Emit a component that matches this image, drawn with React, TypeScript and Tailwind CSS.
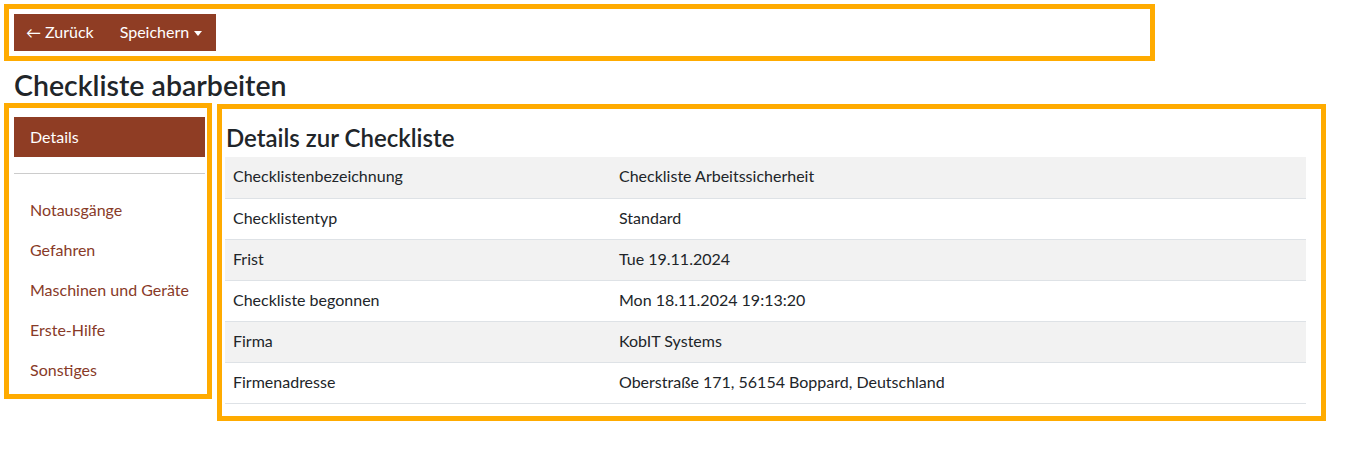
const rows = [
  ["Checklistenbezeichnung", "Checkliste Arbeitssicherheit"],
  ["Checklistentyp", "Standard"],
  ["Frist", "Tue 19.11.2024"],
  ["Checkliste begonnen", "Mon 18.11.2024 19:13:20"],
  ["Firma", "KobIT Systems"],
  ["Firmenadresse", "Oberstraße 171, 56154 Boppard, Deutschland"],
];

const sections = ["Notausgänge", "Gefahren", "Maschinen und Geräte", "Erste-Hilfe", "Sonstiges"];

export default function App() {
  return (
    <div className="w-[1359px] h-[451px] bg-white text-[#212529] font-['Lato','Liberation_Sans',sans-serif] text-[16px]">
      {/* toolbar */}
      <div className="pt-1 pl-1">
        <div className="w-[1151px] h-[57px] border-[5px] border-[#ffab00] px-[5px] pt-[5px]">
          <div className="inline-flex h-[37px] bg-[#8f3d24] text-white">
            <button className="flex items-center gap-1 pl-3 pr-[14px] pb-px">
              <span className="text-[15px]">←</span>
              <span>Zurück</span>
            </button>
            <button className="flex items-center pl-[12px] pr-[14px] pb-px">
              <span>Speichern</span>
              <span className="ml-[5px] mt-[2px] w-0 h-0 border-l-[4px] border-r-[4px] border-t-[5px] border-l-transparent border-r-transparent border-t-white" />
            </button>
          </div>
        </div>

        <h1 className="mt-[8px] pl-[10px] text-[28.5px] leading-[32px] font-semibold">Checkliste abarbeiten</h1>

        <div className="flex items-start gap-[5px] mt-[2px]">
          {/* side nav */}
          <div className="w-[208px] h-[296px] border-[5px] border-[#ffab00] pt-[9px] pl-[5px] pr-[2px]">
            <div className="h-10 flex items-center px-4 pb-px bg-[#8f3d24] text-white">Details</div>
            <div className="mt-4 h-px bg-[#cccccc]" />
            <ul className="mt-[16px]">
              {sections.map((s) => (
                <li key={s} className="h-10 flex items-center px-4 text-[#883a28]">
                  {s}
                </li>
              ))}
            </ul>
          </div>

          {/* details */}
          <div className="w-[1109px] h-[317px] mt-px border-[5px] border-[#ffab00] pl-[3px] pr-[15px] pt-[10px]">
            <h2 className="pl-[1px] text-[24px] leading-[38px] font-semibold">Details zur Checkliste</h2>
            <table className="w-full border-collapse">
              <tbody>
                {rows.map(([k, v], i) => (
                  <tr key={k} className={`h-[41px] border-b border-[#dee2e6] ${i % 2 === 0 ? "bg-[#f2f2f2]" : "bg-white"}`}>
                    <td className="w-[394px] px-2 pb-[2px] align-middle">{k}</td>
                    <td className="px-0 pb-[2px] align-middle">{v}</td>
                  </tr>
                ))}
              </tbody>
            </table>
          </div>
        </div>
      </div>
    </div>
  );
}
